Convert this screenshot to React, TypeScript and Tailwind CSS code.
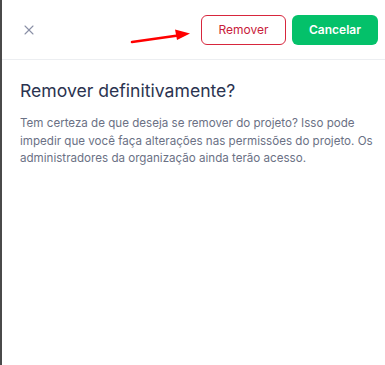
import { X } from "lucide-react";

export default function App() {
  return (
    <div
      className="relative w-[385px] h-[365px] bg-white border-l-2 border-[#4a4a4a] overflow-hidden"
      style={{ fontFamily: "Inter, 'Noto Sans', sans-serif" }}
    >
      <div className="flex items-center justify-between h-[60px] pl-[19px] pr-[7px] border-b border-[#eceef1]">
        <button className="text-[#8a90a6]">
          <X size={16} strokeWidth={1.6} />
        </button>
        <div className="flex items-center gap-[6px]">
          <button className="w-[85px] h-[30px] rounded-[6px] border border-[#d7263d] text-[#c8203a] text-[12px]">
            Remover
          </button>
          <button className="w-[86px] h-[30px] rounded-[6px] bg-[#04c16a] text-white text-[12px] font-semibold">
            Cancelar
          </button>
        </div>
      </div>

      {/* annotation arrow */}
      <svg className="absolute left-[128px] top-[28px]" width="64" height="18" viewBox="0 0 64 18">
        <line x1="2" y1="14" x2="48" y2="7.5" stroke="#ff0000" strokeWidth="2.6" strokeLinecap="round" />
        <polygon points="60,5.5 45,1.5 47,12" fill="#ff0000" />
      </svg>

      <div className="pl-[18px] pr-[4px] pt-[19px]">
        <h2 className="text-[17.6px] text-[#2b3350] leading-[24px]">Remover definitivamente?</h2>
        <p className="mt-[12px] text-[11.6px] leading-[17.5px] text-[#6b7185] whitespace-nowrap">
          Tem certeza de que deseja se remover do projeto? Isso pode
          <br />
          impedir que você faça alterações nas permissões do projeto. Os
          <br />
          administradores da organização ainda terão acesso.
        </p>
      </div>
    </div>
  );
}
